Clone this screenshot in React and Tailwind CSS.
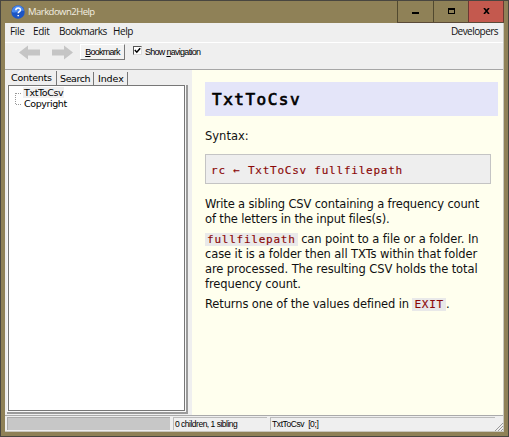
import React from 'react';

const body = "font-['DejaVu_Sans'] text-[11.5px] leading-[15px] text-[#111] whitespace-nowrap";
const code = "font-['DejaVu_Sans_Mono'] text-[11px] tracking-[0.76px] text-[#8b0808] [-webkit-text-stroke:0.15px_#8b0808]";

function TitleBar() {
  return (
    <header className="flex h-[22px] shrink-0 items-start">
      <svg className="ml-[10px] mt-[4px] shrink-0" width="14" height="14" viewBox="0 0 14 14">
        <circle cx="7" cy="7" r="6.7" fill="#1c55c4" />
        <path d="M1 7a6 6 0 0 1 12-1C9 5 5 9 1 7Z" fill="#4b8af0" />
        <path d="M4.8 5.2c0-3 4.7-3 4.7-.3 0 1.700-2.300 1.800-2.300 3.400M7.200 9.900v1.400" fill="none" stroke="#fff" strokeWidth="1.5" />
      </svg>
      <span className="ml-[3px] mt-[3px] font-['Open_Sans'] text-[9.5px] leading-[16px] tracking-[-0.52px] text-[#f3efe2]">Markdown2Help</span>
      <div className="ml-auto mr-[4px] flex h-[22px] border-b border-[#5a4a38]">
        <div className="flex w-[36px] justify-center border-l border-[#51492f] pt-[11px]">
          <div className="h-[2px] w-[7px] bg-black" />
        </div>
        <div className="flex w-[35px] justify-center border-l border-[#51492f] pt-[7px]">
          <div className="h-[6px] w-[7px] border border-t-2 border-black" />
        </div>
        <div className="flex w-[36px] justify-center border-x border-[#6b3832] bg-[#c4594e] pt-[7px]">
          <svg width="7" height="6" viewBox="0 0 7 6"><path d="M1 0 6 6M6 0 1 6" stroke="#000" strokeWidth="1.6" /></svg>
        </div>
      </div>
    </header>
  );
}

function MenuBar() {
  return (
    <nav className="flex h-[20px] shrink-0 items-start border-b border-white pl-[5px] pr-[5px] pt-[1px] font-['Open_Sans'] text-[10px] leading-[15px] tracking-[-0.55px] text-[#111]">
      <span className="w-[23px] tracking-[-0.3px]">File</span>
      <span className="w-[26px] tracking-[-0.3px]">Edit</span>
      <span className="w-[54px]">Bookmarks</span>
      <span className="tracking-[-0.4px]">Help</span>
      <span className="ml-auto">Developers</span>
    </nav>
  );
}

function Toolbar() {
  return (
    <div className="flex h-[27px] shrink-0 items-start border-b border-[#a6a6a6] font-['Liberation_Sans'] text-[9px] leading-[11px] text-black">
      <svg className="ml-[14px] mt-[2px]" width="54" height="15" viewBox="0 0 54 15" fill="#c5c5c5">
        <path d="M0 7.500 9 .5v4h12v6H9v4ZM54 7.500 45 .5v4H33v6h12v4Z" />
      </svg>
      <button className="ml-[7px] mt-[1px] h-[16px] w-[45px] border border-b-[#777] border-l-white border-r-[#777] border-t-white bg-[#f2f2f2] text-center text-[9px] leading-[13px] tracking-[-0.75px]">
        <u>B</u>ookmark
      </button>
      <div className="ml-[8px] mt-[3px] flex h-[9px] w-[9px] items-center justify-center border border-b-[#ddd] border-l-[#555] border-r-[#ddd] border-t-[#555] bg-white">
        <svg className="shrink-0" width="7" height="7" viewBox="0 0 7 7"><path d="M.8 3 2.800 5.200 6.200 1.200" fill="none" stroke="#000" strokeWidth="1.500" /></svg>
      </div>
      <span className="ml-[3px] mt-[4px] whitespace-nowrap tracking-[-0.72px]">Show <u>n</u>avigation</span>
    </div>
  );
}

function Navigation() {
  return (
    <aside className="flex w-[187px] shrink-0 flex-col pl-[2px]">
      <div className="flex h-[15px] items-end font-['DejaVu_Sans'] text-[9.5px] text-black">
        <span className="h-[14px] w-[50px] border-r border-[#777] pl-[4px] leading-[13px] tracking-[-0.25px]">Contents</span>
        <span className="h-[13px] w-[37px] border-r border-[#777] pl-[3px] leading-[14px] tracking-[-0.4px]">Search</span>
        <span className="h-[13px] w-[34px] border-r border-[#777] pl-[4px] leading-[14px] tracking-[-0.1px]">Index</span>
      </div>
      <div className="flex h-[329px] w-[181px] border-b-2 border-r-2 border-[#9a9a9a] bg-[#f8f8f8] pl-[1px]">
        <div className="h-[326px] w-[177px] border border-[#777] bg-white">
          <div className="flex pt-[1px]">
            <svg width="14" height="24" viewBox="0 0 14 24"><path d="M6.500 6V17.500M7 6.500h6M7 17.500h6" fill="none" stroke="#999" strokeDasharray="1 1" /></svg>
            <div className="flex flex-col font-['DejaVu_Sans'] text-[9.5px] leading-[11px] tracking-[-0.4px] text-black">
              <span className="w-[41px] bg-[#f0f0f0] pl-[1px]">TxtToCsv</span>
              <span className="pl-[1px]">Copyright</span>
            </div>
          </div>
        </div>
      </div>
    </aside>
  );
}

function Article() {
  return (
    <main className="flex min-w-0 flex-1 flex-col bg-[#ffffee] pl-[13px] pt-[12px]">
      <h1 className="h-[34px] w-[293px] bg-[#e4e5f9] pl-[7px] font-['DejaVu_Sans_Mono'] text-[16px] font-normal leading-[35px] tracking-[1.5px] text-black [-webkit-text-stroke:0.7px_#000]">TxtToCsv</h1>
      <p className={`${body} mt-[13px]`}>Syntax:</p>
      <pre className={`${code} mt-[10px] h-[30px] w-[286px] border border-[#c4c4c4] bg-[#eee] pl-[5px] leading-[31px]`}>rc ← TxtToCsv fullfilepath</pre>
      <p className={`${body} mt-[13px] tracking-[-0.15px]`}>Write a sibling CSV containing a frequency count<br />of the letters in the input files(s).</p>
      <p className={`${body} mt-[5px] tracking-[-0.1px]`}>
        <code className={`${code} bg-[#e9e9e9] px-[2px]`}>fullfilepath</code> can point to a file or a folder. In<br />
        case it is a folder then all TXTs within that folder<br />
        are processed. The resulting CSV holds the total<br />
        frequency count.
      </p>
      <p className={`${body} mt-[5px] tracking-[-0.13px]`}>Returns one of the values defined in <code className={`${code} bg-[#e9e9e9] px-[2px]`}>EXIT</code>.</p>
    </main>
  );
}

function StatusBar() {
  return (
    <footer className="flex h-[17px] shrink-0 items-start border-t border-[#aaa] pl-[2px] pt-[1px] font-['Liberation_Sans'] text-[8.5px] leading-[13px] tracking-[-0.5px] text-black">
      <div className="h-[13px] w-[163px] border-l border-t border-[#aaa] bg-[#c7c7c7]" />
      <div className="ml-[3px] h-[13px] w-[94px] whitespace-nowrap border-l border-t border-[#bbb] pl-[1px]">0 children, 1 sibling</div>
      <div className="ml-[3px] h-[13px] w-[225px] whitespace-pre border-l border-t border-[#bbb] pl-[1px] tracking-[-0.4px]">TxtToCsv  [0;]</div>
      <svg className="mt-[5px] shrink-0" width="8" height="9" viewBox="0 0 8 9"><path d="M0 9 8 1M3 9 8 4M6 9 8 7" stroke="#999" /></svg>
    </footer>
  );
}

export default function App() {
  return (
    <div className="flex h-[437px] w-[509px] flex-col overflow-hidden border border-[#494640] bg-[#8f8157]">
      <TitleBar />
      <div className="ml-[4px] flex h-[409px] w-[499px] flex-col border-b border-r border-[#c8c6bd] bg-[#efefef]">
        <MenuBar />
        <Toolbar />
        <div className="flex h-[345px] shrink-0">
          <Navigation />
          <Article />
        </div>
        <StatusBar />
      </div>
    </div>
  );
}
